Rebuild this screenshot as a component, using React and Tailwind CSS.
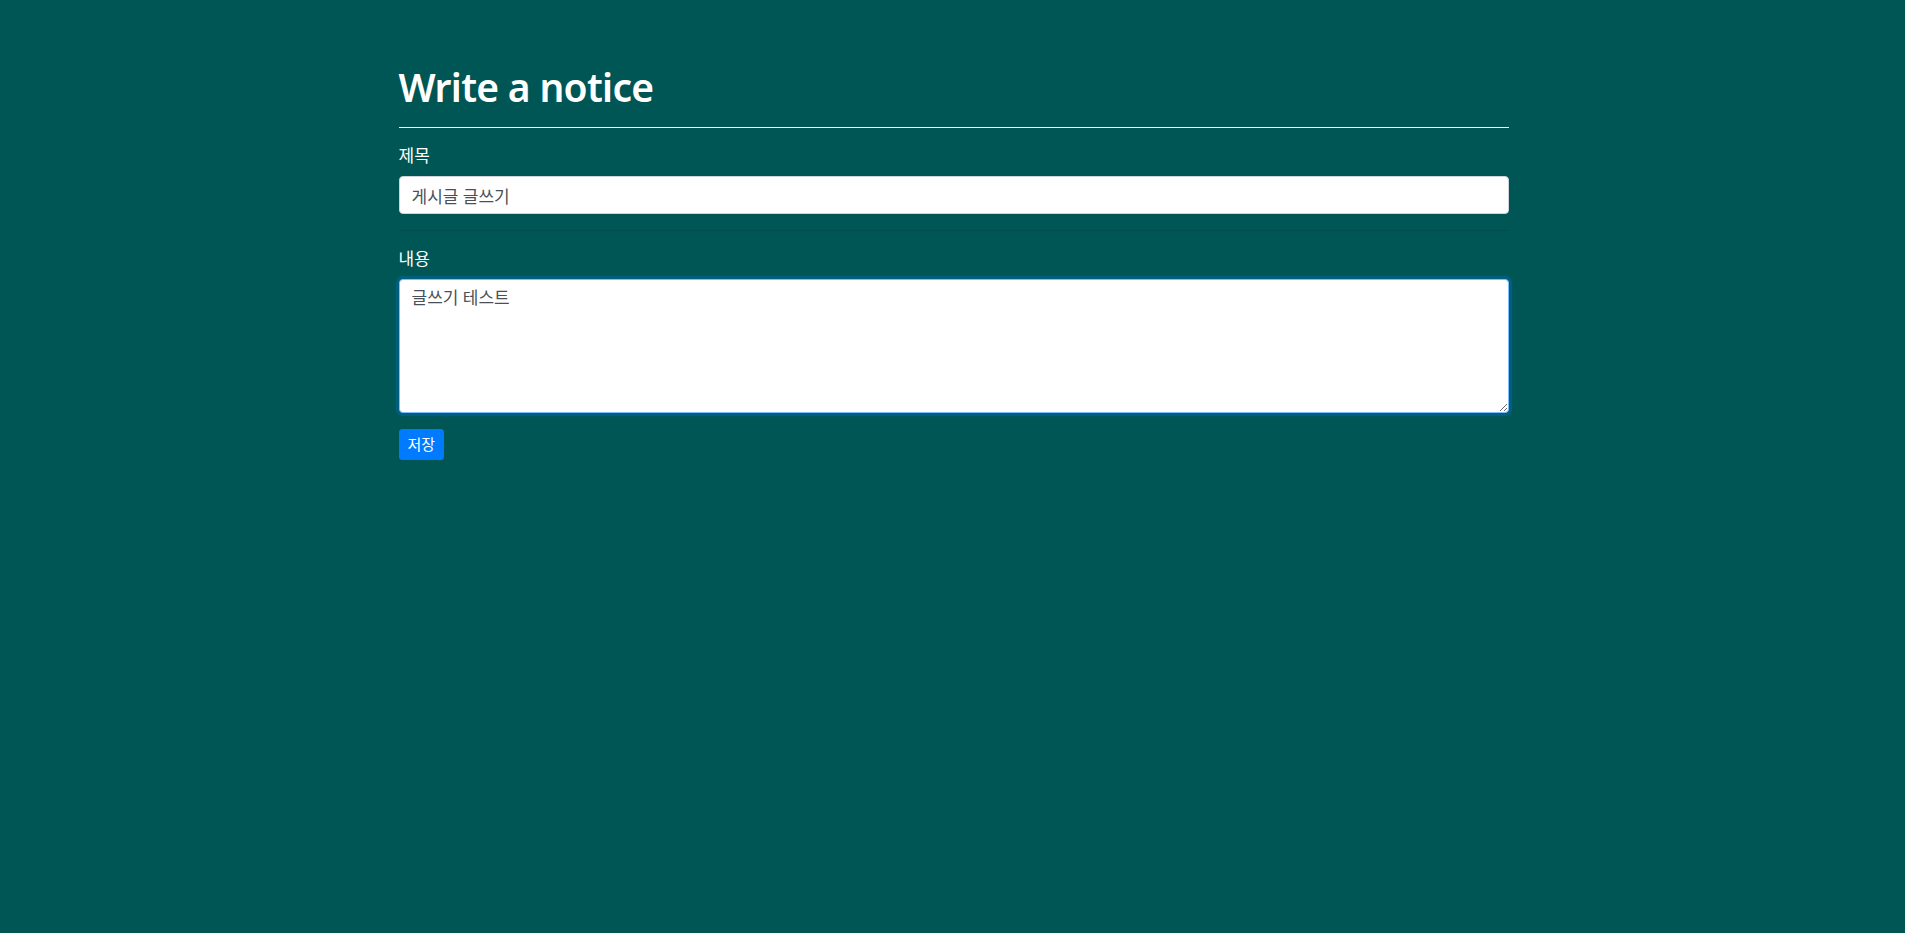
import React, { useState } from 'react';

export default function App() {
  const [title, setTitle] = useState('게시글 글쓰기');
  const [content, setContent] = useState('글쓰기 테스트');

  return (
    <div className="min-h-[933px] bg-[#005655] text-white font-['Noto_Sans','Noto_Sans_CJK_KR',sans-serif]">
      <div className="mx-auto w-[1140px] pl-[16px] pr-[14px] pt-[63px]">
        {/* Heading */}
        <h1 className="text-[39px] leading-[48px] font-semibold tracking-[-0.7px] text-white">Write a notice</h1>
        <hr className="mt-4 mb-4 border-t border-white" />

        <form onSubmit={(e) => e.preventDefault()}>
          <div className="mb-4">
            <label className="block mb-2 text-[17px] leading-6">제목</label>
            <input
              type="text"
              className="block w-full h-[38px] px-3 py-1.5 bg-white border border-[#ced4da] rounded text-[17px] text-[#495057] outline-none"
              value={title}
              onChange={(e) => setTitle(e.target.value)}
            />
          </div>

          <hr className="mt-4 mb-4 border-t border-black/10" />

          <div className="mb-4">
            <label className="block mb-2 text-[17px] leading-6">내용</label>
            <textarea
              rows={5}
              autoFocus
              className="block w-full h-[134px] px-3 py-1.5 bg-white border border-[#80bdff] rounded text-[17px] leading-6 text-[#495057] outline-none shadow-[0_0_0_3.2px_rgba(0,123,255,0.25)]"
              value={content}
              onChange={(e) => setContent(e.target.value)}
            />
          </div>

          <button
            type="submit"
            className="px-2 py-1 bg-[#007bff] border border-[#007bff] rounded-[3px] text-[15px] leading-[21px] text-white"
          >
            저장
          </button>
        </form>
      </div>
    </div>
  );
}
